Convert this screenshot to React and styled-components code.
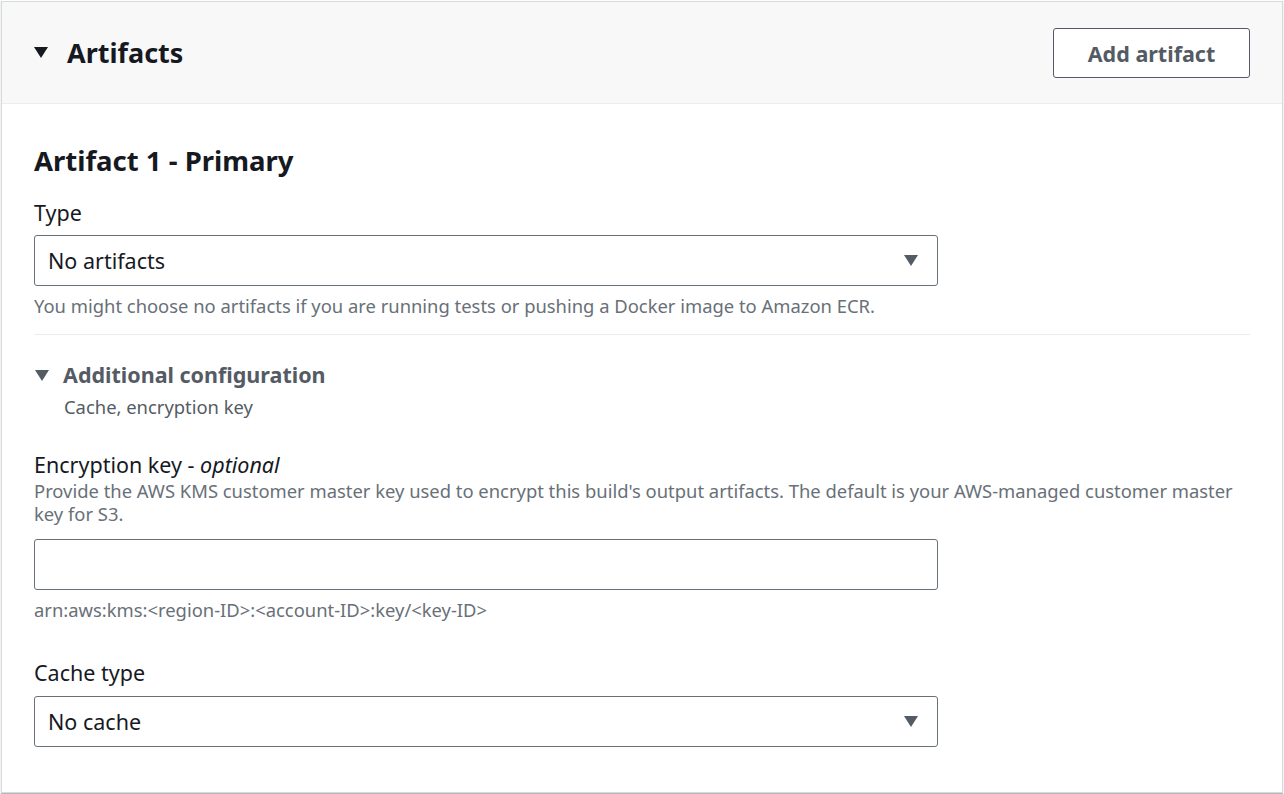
import React from 'react';
import styled, { createGlobalStyle } from 'styled-components';

const GlobalStyle = createGlobalStyle`
  html, body {
    margin: 0;
    padding: 0;
    background: #ffffff;
  }
  body {
    font-family: 'Noto Sans', 'Open Sans', sans-serif;
    color: #16191f;
  }
`;

const Page = styled.div`
  width: 1284px;
  height: 794px;
  box-sizing: border-box;
  padding: 1px;
`;

const Panel = styled.section`
  box-sizing: border-box;
  height: 792px;
  border: 1px solid #d5dbdb;
  background: #ffffff;
  box-shadow: 0 1px 1px rgba(0, 22, 40, 0.3);
`;

const PanelHeader = styled.header`
  height: 102px;
  box-sizing: border-box;
  display: flex;
  align-items: center;
  justify-content: space-between;
  padding: 0 32px;
  background: #f8f8f8;
  border-bottom: 1px solid #eaeded;
`;

const HeaderTitle = styled.h2`
  display: flex;
  align-items: center;
  gap: 19px;
  margin: 0;
  font-size: 27px;
  font-weight: 700;
  color: #16191f;
`;

const Caret = styled.span`
  display: inline-block;
  flex: none;
  width: 0;
  height: 0;
  border-left: ${(p) => p.$size}px solid transparent;
  border-right: ${(p) => p.$size}px solid transparent;
  border-top: ${(p) => p.$size * 1.6}px solid ${(p) => p.$color || '#16191f'};
`;

const Button = styled.button`
  box-sizing: border-box;
  width: 197px;
  height: 50px;
  margin-top: 1px;
  background: #ffffff;
  border: 1px solid #545b64;
  border-radius: 3px;
  font-family: inherit;
  font-size: 21.5px;
  font-weight: 700;
  color: #545b64;
  cursor: pointer;
`;

const PanelBody = styled.div`
  padding: 38px 32px 0 32px;
  display: flex;
  flex-direction: column;
`;

const SectionTitle = styled.h3`
  margin: 0 0 19px 0;
  font-size: 27.5px;
  font-weight: 700;
  line-height: 38px;
`;

const Field = styled.div`
  display: flex;
  flex-direction: column;
  margin-bottom: ${(p) => p.$gap || 0}px;
`;

const Label = styled.label`
  font-size: 21.5px;
  line-height: 28px;
  margin-bottom: ${(p) => p.$space ?? 8}px;
  em {
    font-style: italic;
  }
`;

const Hint = styled.div`
  font-size: 18.4px;
  line-height: 23px;
  color: #687078;
  margin-top: ${(p) => p.$top || 0}px;
  margin-bottom: ${(p) => p.$bottom || 0}px;
`;

const SelectBox = styled.div`
  box-sizing: border-box;
  width: 904px;
  height: 51px;
  display: flex;
  align-items: center;
  justify-content: space-between;
  padding: 0 19px 0 13px;
  border: 1px solid #687078;
  border-radius: 3px;
  font-size: 21.5px;
  color: #16191f;
`;

const TextInput = styled.input`
  box-sizing: border-box;
  width: 904px;
  height: 51px;
  padding: 0 13px;
  border: 1px solid #687078;
  border-radius: 3px;
  font-family: inherit;
  font-size: 21.5px;
  outline: none;
`;

const Divider = styled.hr`
  width: 100%;
  margin: 17px 0 0 0;
  border: 0;
  border-top: 1px solid #eaeded;
`;

const Expander = styled.div`
  margin-top: 26px;
  display: flex;
  flex-direction: column;
  margin-bottom: 32px;
`;

const ExpanderHead = styled.div`
  display: flex;
  align-items: center;
  gap: 14px;
  padding-left: 1px;
  font-size: 21.5px;
  font-weight: 700;
  line-height: 28px;
  color: #545b64;
`;

const ExpanderSub = styled.div`
  padding-left: 30px;
  font-size: 18.4px;
  line-height: 24px;
  color: #545b64;
  margin-top: 6px;
`;

export default function App() {
  return (
    <Page>
      <GlobalStyle />
      <Panel>
        <PanelHeader>
          <HeaderTitle>
            <Caret $size={7} />
            Artifacts
          </HeaderTitle>
          <Button>Add artifact</Button>
        </PanelHeader>
        <PanelBody>
          <SectionTitle>Artifact 1 - Primary</SectionTitle>
          <Field>
            <Label>Type</Label>
            <SelectBox>
              No artifacts
              <Caret $size={7} $color="#545b64" />
            </SelectBox>
            <Hint $top={8}>
              You might choose no artifacts if you are running tests or pushing a Docker image to Amazon ECR.
            </Hint>
          </Field>
          <Divider />
          <Expander>
            <ExpanderHead>
              <Caret $size={7} $color="#545b64" />
              Additional configuration
            </ExpanderHead>
            <ExpanderSub>Cache, encryption key</ExpanderSub>
          </Expander>
          <Field $gap={38}>
            <Label $space={0}>
              Encryption key - <em>optional</em>
            </Label>
            <Hint $bottom={14}>
              Provide the AWS KMS customer master key used to encrypt this build's output artifacts. The default is your AWS-managed customer master key for S3.
            </Hint>
            <TextInput />
            <Hint $top={8}>arn:aws:kms:&lt;region-ID&gt;:&lt;account-ID&gt;:key/&lt;key-ID&gt;</Hint>
          </Field>
          <Field>
            <Label $space={9}>Cache type</Label>
            <SelectBox>
              No cache
              <Caret $size={7} $color="#545b64" />
            </SelectBox>
          </Field>
        </PanelBody>
      </Panel>
    </Page>
  );
}
